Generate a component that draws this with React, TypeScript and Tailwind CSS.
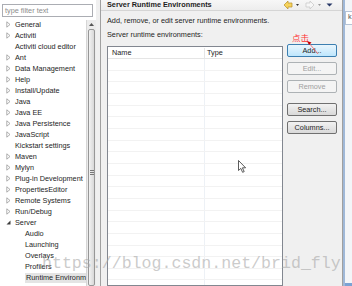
const treeItems: { label: string; arrow: 'closed' | 'open' | 'none'; child?: boolean; selected?: boolean }[] = [
  { label: 'General', arrow: 'closed' },
  { label: 'Activiti', arrow: 'closed' },
  { label: 'Activiti cloud editor', arrow: 'none' },
  { label: 'Ant', arrow: 'closed' },
  { label: 'Data Management', arrow: 'closed' },
  { label: 'Help', arrow: 'closed' },
  { label: 'Install/Update', arrow: 'closed' },
  { label: 'Java', arrow: 'closed' },
  { label: 'Java EE', arrow: 'closed' },
  { label: 'Java Persistence', arrow: 'closed' },
  { label: 'JavaScript', arrow: 'closed' },
  { label: 'Kickstart settings', arrow: 'none' },
  { label: 'Maven', arrow: 'closed' },
  { label: 'Mylyn', arrow: 'closed' },
  { label: 'Plug-in Development', arrow: 'closed' },
  { label: 'PropertiesEditor', arrow: 'closed' },
  { label: 'Remote Systems', arrow: 'closed' },
  { label: 'Run/Debug', arrow: 'closed' },
  { label: 'Server', arrow: 'open' },
  { label: 'Audio', arrow: 'none', child: true },
  { label: 'Launching', arrow: 'none', child: true },
  { label: 'Overlays', arrow: 'none', child: true },
  { label: 'Profilers', arrow: 'none', child: true },
  { label: 'Runtime Environm', arrow: 'none', child: true, selected: true },
];

function TreeArrow({ kind }: { kind: 'closed' | 'open' | 'none' }) {
  if (kind === 'none') return <span className="w-[5px] shrink-0" />;
  return (
    <svg width="5" height="7" viewBox="0 0 5 7" className="shrink-0">
      {kind === 'closed' ? (
        <path d="M0.8 0.8 L4 3.5 L0.8 6.2 Z" fill="none" stroke="#9a9a9a" strokeWidth="0.8" />
      ) : (
        <path d="M4.5 1.5 L4.5 5.5 L0.5 5.5 Z" fill="#3c3c3c" />
      )}
    </svg>
  );
}

function Button({ label, kind = 'normal' }: { label: string; kind?: 'default' | 'normal' | 'disabled' }) {
  const styles = {
    default: 'border-[#3c7fb1] bg-gradient-to-b from-[#eaf6fd] to-[#bee6fd] text-[#1e1e1e]',
    normal: 'border-[#707070] bg-gradient-to-b from-[#f2f2f2] to-[#d9d9d9] text-[#1e1e1e]',
    disabled: 'border-[#adb2b5] bg-[#f4f4f4] text-[#a0a0a0]',
  }[kind];
  return (
    <div className={`flex h-[13px] w-[50px] items-center justify-center rounded-[2px] border ${styles}`}>
      {label}
    </div>
  );
}

export default function App() {
  return (
    <div className="relative flex h-[286px] w-[352px] overflow-hidden bg-[#f0f0f0] font-['Liberation_Sans',Arial,sans-serif] text-[7.3px] leading-[10px] text-[#1e1e1e]">
      {/* preference tree */}
      <div className="flex w-[96px] shrink-0 flex-col bg-white">
        <div className="px-[2px] pt-[4px]">
          <div className="flex h-[13px] w-[91px] items-center border border-[#abadb3] px-[2px] text-[#8d8d8d]">
            type filter text
          </div>
        </div>
        <div className="mt-[2px] flex min-h-0 flex-1">
          <ul className="w-[86px] overflow-hidden">
            {treeItems.map((item) => (
              <li
                key={item.label}
                className={`flex h-[11px] items-center whitespace-nowrap ${item.child ? 'pl-[25px]' : 'pl-[6px]'}`}
              >
                {!item.child && <TreeArrow kind={item.arrow} />}
                <span
                  className={`${item.child ? '' : 'ml-[4px]'} ${item.selected ? 'bg-[#e4e4e4] pl-[1px] pr-[6px]' : ''}`}
                >
                  {item.label}
                </span>
              </li>
            ))}
          </ul>
          <div className="mt-[1px] flex w-[10px] flex-col border-l border-[#d6d6d6] bg-[#ececec]">
            <div className="flex h-[9px] items-center justify-center">
              <svg width="5" height="3" viewBox="0 0 5 3">
                <path d="M0 3 L2.5 0 L5 3 Z" fill="#555" />
              </svg>
            </div>
            <div className="mx-[1px] flex flex-1 flex-col items-center rounded-[2px] border border-[#979797] bg-gradient-to-r from-[#f3f3f3] to-[#d8d8d8]">
              <div className="mt-[140px] flex flex-col gap-[1px]">
                <div className="h-px w-[4px] bg-[#777]" />
                <div className="h-px w-[4px] bg-[#777]" />
                <div className="h-px w-[4px] bg-[#777]" />
              </div>
            </div>
          </div>
        </div>
      </div>

      {/* sash */}
      <div className="w-[4px] shrink-0" />

      {/* page */}
      <div className="flex w-[243px] shrink-0 flex-col border-x border-[#a0a0a0]">
        <div className="flex h-[20px] items-center justify-between border-b border-[#d5d5d5] bg-gradient-to-b from-[#f7f7f7] to-[#ededed] pl-[6px] pr-[9px]">
          <span className="font-bold">Server Runtime Environments</span>
          <svg width="50" height="10" viewBox="0 0 50 10">
            <polygon points="1,5 5,1 5,3 9,3 9,7 5,7 5,9" fill="#f6d35c" stroke="#b8902a" strokeWidth="0.7" />
            <polygon points="13,4 16,4 14.5,6" fill="#333" />
            <polygon points="31,5 27,1 27,3 23,3 23,7 27,7 27,9" fill="#f7f7f7" stroke="#c4c4c4" strokeWidth="0.7" />
            <polygon points="35,4 38,4 36.5,6" fill="#9a9a9a" />
            <polygon points="43.5,3.5 49.5,3.5 46.5,6.5" fill="#263766" />
          </svg>
        </div>
        <div className="pl-[6px]">
          <p className="mt-[5px]">Add, remove, or edit server runtime environments.</p>
          <p className="mt-[3.5px]">Server runtime environments:</p>
          <div className="mt-[4.5px] flex items-start gap-[4px]">
            <div className="mt-[2px] h-[240px] w-[176px] overflow-hidden border border-[#828790] bg-white">
              <div className="flex h-[12px] items-center border-b border-[#e5e5e5]">
                <span className="w-[97px] border-r border-[#e5e5e5] pl-[4px]">Name</span>
                <span className="pl-[2px]">Type</span>
              </div>
              {Array.from({ length: 20 }).map((_, i) => (
                <div key={i} className="flex h-[11.67px] border-b border-[#f2f2f2]">
                  <div className="w-[97px] border-r border-[#edf1f6]" />
                </div>
              ))}
            </div>
            <div className="flex flex-col gap-[5px]">
              <Button label="Add..." kind="default" />
              <Button label="Edit..." kind="disabled" />
              <Button label="Remove" kind="disabled" />
              <div className="mt-[5px]">
                <Button label="Search..." />
              </div>
              <Button label="Columns..." />
            </div>
          </div>
        </div>
      </div>

      {/* neighbouring window edge */}
      <div className="flex flex-1 flex-col border-l-2 border-[#9fb8d8] bg-[#f3f5f8]">
        <div className="mt-[11px] h-[14px] overflow-hidden whitespace-nowrap border-y border-l border-[#b5c3d6] bg-white pl-[2px] text-[#555]">
          k a
        </div>
        <div className="mt-auto h-[3px] bg-[#7ba2d4]" />
      </div>

      {/* annotation */}
      <span className="absolute left-[292px] top-[32px] font-['Noto_Sans_CJK_SC',sans-serif] text-[8.5px] leading-[10px] text-[#ff3030]">
        点击
      </span>
      <svg className="absolute left-[305px] top-[38px]" width="16" height="18" viewBox="0 0 16 18">
        <line x1="4" y1="5" x2="13" y2="16" stroke="#ff5a5a" strokeWidth="0.8" />
        <polygon points="2,3 6.5,4.5 4,7" fill="#c80000" />
      </svg>

      {/* mouse pointer */}
      <svg className="absolute left-[238px] top-[160px]" width="9" height="13" viewBox="0 0 9 13">
        <path d="M0.5 0.5 L0.5 10.5 L2.8 8.4 L4.6 12.3 L6.2 11.6 L4.4 7.8 L7.6 7.8 Z" fill="#fff" stroke="#333" strokeWidth="0.8" />
      </svg>

      {/* watermark */}
      <span className="pointer-events-none absolute left-[42px] top-[252px] whitespace-nowrap font-['Liberation_Mono',monospace] text-[16.6px] leading-[24px] text-[#a8a8a8]/60">
        https://blog.csdn.net/brid_fly
      </span>
    </div>
  );
}
